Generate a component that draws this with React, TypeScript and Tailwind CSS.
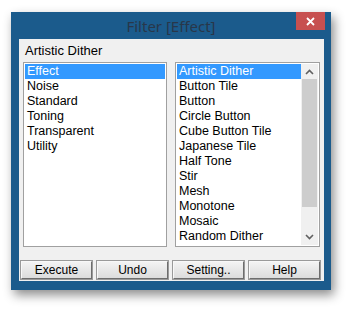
import { useState } from "react"

const categories = ["Effect", "Noise", "Standard", "Toning", "Transparent", "Utility"]

const filters = [
  "Artistic Dither",
  "Button Tile",
  "Button",
  "Circle Button",
  "Cube Button Tile",
  "Japanese Tile",
  "Half Tone",
  "Stir",
  "Mesh",
  "Monotone",
  "Mosaic",
  "Random Dither",
]

function ListItem({ label, active }: { label: string; active: boolean }) {
  return (
    <div
      className={
        active
          ? "h-[15px] leading-[15px] pl-[2px] bg-[#3399ff] text-white"
          : "h-[15px] leading-[15px] pl-[2px] text-black"
      }
    >
      {label}
    </div>
  )
}

function Arrow({ up }: { up: boolean }) {
  return (
    <svg width="9" height="6" viewBox="0 0 9 6" className="text-[#606060]">
      <path
        d={up ? "M1 5 L4.5 1.5 L8 5" : "M1 1 L4.5 4.5 L8 1"}
        fill="none"
        stroke="currentColor"
        strokeWidth="1.6"
      />
    </svg>
  )
}

function WinButton({ children }: { children: React.ReactNode }) {
  return (
    <button className="w-[72px] h-[18px] border border-t-[#f8f8f8] border-l-[#f8f8f8] border-r-[#6d6d6d] border-b-[#6d6d6d] bg-gradient-to-b from-[#f3f3f3] to-[#dcdcdc] text-[12px] leading-[14px] text-black outline outline-1 outline-[#9a9a9a]">
      {children}
    </button>
  )
}

export default function App() {
  const [cat] = useState(0)
  const [sel] = useState(0)

  return (
    <div className="w-[350px] h-[310px] bg-white pl-[11px] pt-[12px] font-['Liberation_Sans',Arial,sans-serif]">
      <div className="w-[320px] h-[278px] bg-[#1b5b8c] flex flex-col shadow-[3px_5px_10px_rgba(0,0,0,0.45)]">
        {/* Title bar */}
        <div className="relative h-[27px] flex items-center justify-center">
          <span className="text-[15px] text-[#28374a] font-['Noto_Sans',sans-serif] pt-[2px]">
            Filter [Effect]
          </span>
          <div className="absolute right-[6px] top-0 w-[29px] h-[18px] bg-[#c75050] flex items-center justify-center">
            <svg width="9" height="9" viewBox="0 0 9 9">
              <path d="M1 1 L8 8 M8 1 L1 8" stroke="white" strokeWidth="1.8" />
            </svg>
          </div>
        </div>

        {/* Client area */}
        <div className="ml-[8px] mr-[7px] h-[242px] bg-[#f0f0f0] flex flex-col px-[4px]">
          <div className="h-[23px] pl-[2px] pt-[4px] text-[13px] leading-[16px] text-black">
            Artistic Dither
          </div>

          <div className="flex gap-[8px] h-[185px]">
            <div className="w-[145px] border border-[#a0a0a0] bg-white p-[1px] text-[12.5px]">
              {categories.map((c, i) => (
                <ListItem key={c} label={c} active={i === cat} />
              ))}
            </div>

            <div className="w-[146px] border border-[#a0a0a0] bg-white p-[1px] flex text-[12.5px]">
              <div className="flex-1">
                {filters.map((f, i) => (
                  <ListItem key={f} label={f} active={i === sel} />
                ))}
              </div>
              <div className="w-[17px] bg-[#f0f0f0] flex flex-col items-center">
                <div className="h-[15px] flex items-center justify-center">
                  <Arrow up />
                </div>
                <div className="w-[15px] h-[128px] bg-[#cdcdcd]" />
                <div className="flex-1" />
                <div className="h-[17px] flex items-center justify-center">
                  <Arrow up={false} />
                </div>
              </div>
            </div>
          </div>

          <div className="flex gap-[5px] pt-[14px] pl-[-2px] -ml-[2px]">
            <WinButton>Execute</WinButton>
            <WinButton>Undo</WinButton>
            <WinButton>Setting..</WinButton>
            <WinButton>Help</WinButton>
          </div>
        </div>
      </div>
    </div>
  )
}
